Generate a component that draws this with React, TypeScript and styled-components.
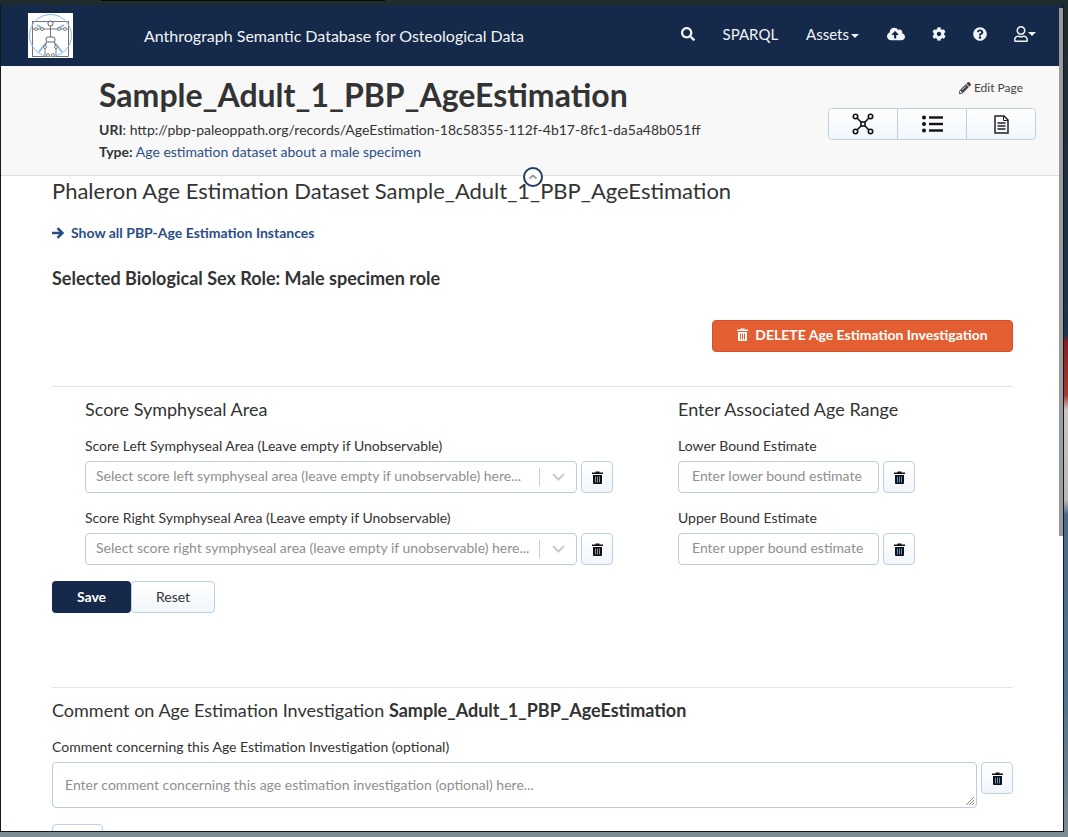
import React from "react";
import styled, { createGlobalStyle } from "styled-components";
import { FaSearch, FaCloudUploadAlt, FaCog, FaQuestionCircle, FaPencilAlt, FaRegUser } from "react-icons/fa";

const Global = createGlobalStyle`
  html, body { margin: 0; padding: 0; height: 837px; overflow: hidden; }
  body { font-family: Lato, "Liberation Sans", sans-serif; font-size: 14px; color: #333; background: #5c6670; }
  * { box-sizing: border-box; }
`;

const Desktop = styled.div`
  position: relative; width: 1068px; height: 837px; overflow: hidden; padding: 5px 4px 0 0;
  background: linear-gradient(180deg,
    #1e2c2e 0, #1e2c2e 6px, #1c3350 335px, #8d1d22 342px, #a83a30 395px, #c9c6c2 410px,
    #b9b6b6 500px, #4a6a8a 515px, #4f7590 700px, #7c8a92 830px, #7c8a92 837px);
  &::before {
    content: ""; position: absolute; left: 101px; top: 0; width: 284px; height: 1px; background: #050808;
  }
`;
const Win = styled.div`
  position: relative; width: 1064px; height: 827px; background: #fff; overflow: hidden;
  border: 1px solid #11181f; border-top: 0;
`;
const Scroll = styled.div`
  position: absolute; top: 3px; right: 0; width: 4px; height: 528px; background: #9a9a9a;
`;
const NavBar = styled.nav`
  height: 61px; background: #152a4a; display: flex; align-items: center; padding: 0 27px 0 27px; color: #f2f4f7;
`;
const Logo = styled.svg`width: 45px; height: 45px; background: #fff; flex: none;`;
const Brand = styled.div`margin-left: 71px; font-size: 16px; flex: 1;`;
const NavItems = styled.div`display: flex; align-items: center; margin-bottom: 4px;`;
const NavIcon = styled.span<{ $ml: number }>`margin-left: ${p => p.$ml}px; display: flex; align-items: center;`;
const NavLink = styled.span<{ $ml: number }>`margin-left: ${p => p.$ml}px; font-size: 15px;`;
const Caret = styled.span<{ $ml?: number }>`
  display: inline-block; margin-left: ${p => p.$ml ?? 2}px; vertical-align: 2px;
  border-top: 4px solid #f2f4f7; border-left: 4px solid transparent; border-right: 4px solid transparent;
`;
const Header = styled.header`
  position: relative; height: 110px; background: #f8f8f8; border-bottom: 1px solid #ddd;
  display: flex; justify-content: space-between; padding: 9px 27px 0 98px;
`;
const Title = styled.h1`margin: -1px 0 0; font-size: 32px; line-height: 41px; font-weight: 700; color: #333;`;
const Meta = styled.div`font-size: 14px; line-height: 22px; margin-top: 4px; color: #333;`;
const Blue = styled.span`color: #2b4e85;`;
const Tools = styled.div`display: flex; flex-direction: column; align-items: flex-end;`;
const Edit = styled.div`font-size: 12px; line-height: 16px; display: flex; align-items: center; gap: 3px; margin: 5px 13px 12px 0; color: #444;`;
const Group = styled.div`display: flex; width: 208px; height: 32px; border: 1px solid #bfcfe0; border-radius: 4px; overflow: hidden;`;
const GroupBtn = styled.div`
  flex: 1; display: flex; align-items: center; justify-content: center;
  background: linear-gradient(#fff, #f1f6fc); & + & { border-left: 1px solid #bfcfe0; }
`;
const Toggle = styled.div`
  position: absolute; left: 522px; top: 101px; width: 20px; height: 20px; border-radius: 50%;
  border: 2px solid #1f3b66; background: #fff; display: flex; align-items: center; justify-content: center;
`;
const Main = styled.main`padding: 0 50px 0 51px;`;
const PageTitle = styled.h2`margin: 2px 0 0; font-size: 22px; line-height: 26px; font-weight: 400; color: #333;`;
const ShowAll = styled.div`margin-top: 19px; font-size: 14px; line-height: 20px; font-weight: 700; color: #2b4e85; display: flex; align-items: center; gap: 7px;`;
const RoleTitle = styled.div`margin-top: 24px; font-size: 18px; line-height: 22px; font-weight: 700; color: #333;`;
const DangerRow = styled.div`display: flex; justify-content: flex-end; margin-top: 31px;`;
const Danger = styled.div`
  width: 301px; height: 32px; padding-bottom: 3px; background: #e35f31; border: 1px solid #cf5228; border-radius: 4px; color: #fff;
  display: flex; align-items: center; justify-content: center; gap: 7px; font-size: 14px; font-weight: 700;
`;
const Rule = styled.hr<{ $top: number }>`border: 0; border-top: 1px solid #e5e5e5; margin: ${p => p.$top}px 0 0;`;
const Columns = styled.div`display: flex; padding-left: 33px;`;
const LeftCol = styled.div`width: 593px;`;
const SectionTitle = styled.div`margin-top: 11px; font-size: 18px; line-height: 22px; color: #333;`;
const Label = styled.div`font-size: 14px; line-height: 18px; color: #333;`;
const Field = styled.div<{ $mt: number }>`margin-top: ${p => p.$mt}px;`;
const Row = styled.div`display: flex; gap: 4px; margin-top: 6px;`;
const Select = styled.div`
  width: 492px; height: 32px; border: 1px solid #bdcbdf; border-radius: 4px; background: #fff;
  display: flex; align-items: center; padding-left: 10px; color: #8f8f8f; font-size: 14px; white-space: nowrap;
`;
const SelectText = styled.span`flex: 1; overflow: hidden; padding-bottom: 3px;`;
const Sep = styled.span`width: 1px; height: 18px; background: #ccc;`;
const Chevron = styled.svg`width: 36px; height: 16px;`;
const Input = styled.div`
  width: 201px; height: 32px; padding: 0 0 3px 13px; border: 1px solid #bdcbdf; border-radius: 4px; background: #fff;
  display: flex; align-items: center; color: #8f8f8f; font-size: 14px; white-space: nowrap;
`;
const TrashBtn = styled.div`
  width: 32px; height: 32px; flex: none; border: 1px solid #bfcfe0; border-radius: 4px;
  background: linear-gradient(#fff, #f1f6fc); display: flex; align-items: center; justify-content: center;
`;
const Buttons = styled.div`display: flex; margin-top: 16px;`;
const Save = styled.div`
  width: 79px; height: 32px; padding-bottom: 2px; background: #152a4a; border-radius: 4px; color: #fff; font-weight: 700; font-size: 14px;
  display: flex; align-items: center; justify-content: center;
`;
const Reset = styled.div`
  width: 84px; height: 32px; padding-bottom: 2px; border: 1px solid #bfcfe0; border-radius: 4px; background: linear-gradient(#fff, #f1f6fc);
  color: #333; font-size: 14px; display: flex; align-items: center; justify-content: center;
`;
const CommentTitle = styled.div`margin-top: 10px; font-size: 18px; line-height: 24px; color: #333; b { font-weight: 700; }`;
const CommentLabel = styled.div`margin-top: 16px; font-size: 14px; line-height: 18px;`;
const CommentRow = styled.div`display: flex; gap: 4px; margin-top: 6px; align-items: flex-start;`;
const Comment = styled.div`
  position: relative; flex: 1; height: 46px; padding: 0 0 2px 12px; border: 1px solid #bdcbdf; border-radius: 4px; color: #8f8f8f;
  display: flex; align-items: center; font-size: 14px;
`;
const Grip = styled.svg`position: absolute; right: 1px; bottom: 1px; width: 10px; height: 10px;`;
const NextBtn = styled.div`
  width: 51px; height: 32px; margin-top: 16px; border: 1px solid #bfcfe0; border-radius: 4px; background: #fff;
`;

const Vitruvian = () => (
  <Logo viewBox="0 0 45 45">
    <rect x="4.500" y="8.500" width="36" height="35" fill="none" stroke="#555" strokeWidth="0.8" />
    <circle cx="22.500" cy="22.500" r="21" fill="none" stroke="#85b8ec" strokeWidth="1" />
    <path d="M9 12l7 4M36 12l-7 4M11 39l7-9M34 39l-7-9" stroke="#85b8ec" strokeWidth="2" />
    <circle cx="22.500" cy="10.500" r="2.600" fill="#fff" stroke="#555" />
    <path d="M5 16h35M22.500 13v11M17 34v8M28 34v8M19 28l-2 6M26 28l2 6" fill="none" stroke="#666" strokeWidth="0.9" />
    <rect x="18" y="24" width="9" height="5" rx="2" fill="#fff" stroke="#666" />
    <g fill="#fff" stroke="#666" strokeWidth="0.8">
      <circle cx="8" cy="16" r="1.500" /><circle cx="14" cy="16" r="1.500" />
      <circle cx="31" cy="16" r="1.500" /><circle cx="37" cy="16" r="1.500" />
      <circle cx="17" cy="34" r="1.500" /><circle cx="28" cy="34" r="1.500" />
      <circle cx="20" cy="42" r="1.500" /><circle cx="25" cy="42" r="1.500" />
    </g>
  </Logo>
);

const NetworkIcon = () => (
  <svg width="22" height="22" viewBox="0 0 22 22" fill="none" stroke="#111" strokeWidth="1.600">
    <circle cx="3.500" cy="3.500" r="2.200" /><circle cx="18.500" cy="3.500" r="2.200" />
    <circle cx="3.500" cy="18.500" r="2.200" /><circle cx="18.500" cy="18.500" r="2.200" />
    <rect x="9" y="9" width="4" height="4" />
    <path d="M5 5l4 4M17 5l-4 4M5 17l4-4M17 17l-4-4" />
  </svg>
);
const ListIcon = () => (
  <svg width="21" height="18" viewBox="0 0 21 18" fill="#111">
    <circle cx="2" cy="2.500" r="2" /><circle cx="2" cy="9" r="2" /><circle cx="2" cy="15.500" r="2" />
    <rect x="7" y="1.300" width="14" height="2.400" /><rect x="7" y="7.800" width="14" height="2.400" /><rect x="7" y="14.300" width="14" height="2.400" />
  </svg>
);
const DocIcon = () => (
  <svg width="15" height="19" viewBox="0 0 15 19" fill="none" stroke="#222" strokeWidth="1.500">
    <path d="M1 1h9l4 4v13H1z" /><path d="M9.500 1v4.500H14" strokeWidth="1" /><path d="M3.500 8h8M3.500 11h8M3.500 14h8" />
  </svg>
);
const ArrowIcon = () => (
  <svg width="12" height="12" viewBox="0 0 12 12" fill="none" stroke="#2b4e85" strokeWidth="2.600">
    <path d="M0 6h10M5.500 1.200L10.300 6l-4.800 4.800" />
  </svg>
);
const TrashIcon = ({ body = "#111", stripe = "#8a94a0" }: { body?: string; stripe?: string }) => (
  <svg width="11" height="13" viewBox="0 0 11 13">
    <path d="M3.500 1.500V.5h4v1H11v1.500H0V1.500z" fill={body} />
    <path d="M1 4h9v8a1 1 0 0 1-1 1H2a1 1 0 0 1-1-1z" fill={body} />
    <path d="M3.500 5.500v6M5.500 5.500v6M7.500 5.500v6" stroke={stripe} strokeWidth="1" />
  </svg>
);
const Drop = () => (
  <Chevron viewBox="0 0 36 16"><path d="M13 5l5.500 5.500L24 5" fill="none" stroke="#ccc" strokeWidth="2" /></Chevron>
);

export default function App() {
  return (
    <Desktop>
      <Global />
      <Win>
        <NavBar>
          <Vitruvian />
          <Brand>Anthrograph Semantic Database for Osteological Data</Brand>
          <NavItems>
            <NavIcon $ml={0}><FaSearch size={14} /></NavIcon>
            <NavLink $ml={28}>SPARQL</NavLink>
            <NavLink $ml={28}>Assets<Caret /></NavLink>
            <NavIcon $ml={28}><FaCloudUploadAlt size={18} /></NavIcon>
            <NavIcon $ml={27}><FaCog size={14} /></NavIcon>
            <NavIcon $ml={27}><FaQuestionCircle size={14} /></NavIcon>
            <NavIcon $ml={26}><FaRegUser size={16} /><Caret $ml={-1} /></NavIcon>
          </NavItems>
        </NavBar>
        <Header>
          <div>
            <Title>Sample_Adult_1_PBP_AgeEstimation</Title>
            <Meta>
              <div><b>URI</b>: http://pbp-paleoppath.org/records/AgeEstimation-18c58355-112f-4b17-8fc1-da5a48b051ff</div>
              <div><b>Type:</b> <Blue>Age estimation dataset about a male specimen</Blue></div>
            </Meta>
          </div>
          <Tools>
            <Edit><FaPencilAlt size={12} />Edit Page</Edit>
            <Group>
              <GroupBtn><NetworkIcon /></GroupBtn>
              <GroupBtn><ListIcon /></GroupBtn>
              <GroupBtn><DocIcon /></GroupBtn>
            </Group>
          </Tools>
          <Toggle>
            <svg width="10" height="6" viewBox="0 0 10 6"><path d="M1.500 4.500L5 1.500l3.500 3" fill="none" stroke="#999" strokeWidth="1.800" /></svg>
          </Toggle>
        </Header>
        <Main>
          <PageTitle>Phaleron Age Estimation Dataset Sample_Adult_1_PBP_AgeEstimation</PageTitle>
          <ShowAll><ArrowIcon />Show all PBP-Age Estimation Instances</ShowAll>
          <RoleTitle>Selected Biological Sex Role: Male specimen role</RoleTitle>
          <DangerRow><Danger><TrashIcon body="#fff" stripe="#e35f31" />DELETE Age Estimation Investigation</Danger></DangerRow>
          <Rule $top={34} />
          <Columns>
            <LeftCol>
              <SectionTitle>Score Symphyseal Area</SectionTitle>
              <Field $mt={17}>
                <Label>Score Left Symphyseal Area (Leave empty if Unobservable)</Label>
                <Row>
                  <Select><SelectText>Select score left symphyseal area (leave empty if unobservable) here...</SelectText><Sep /><Drop /></Select>
                  <TrashBtn><TrashIcon /></TrashBtn>
                </Row>
              </Field>
              <Field $mt={16}>
                <Label>Score Right Symphyseal Area (Leave empty if Unobservable)</Label>
                <Row>
                  <Select><SelectText>Select score right symphyseal area (leave empty if unobservable) here...</SelectText><Sep /><Drop /></Select>
                  <TrashBtn><TrashIcon /></TrashBtn>
                </Row>
              </Field>
            </LeftCol>
            <div>
              <SectionTitle>Enter Associated Age Range</SectionTitle>
              <Field $mt={17}>
                <Label>Lower Bound Estimate</Label>
                <Row><Input>Enter lower bound estimate</Input><TrashBtn><TrashIcon stripe="#5b93c9" /></TrashBtn></Row>
              </Field>
              <Field $mt={16}>
                <Label>Upper Bound Estimate</Label>
                <Row><Input>Enter upper bound estimate</Input><TrashBtn><TrashIcon stripe="#5b93c9" /></TrashBtn></Row>
              </Field>
            </div>
          </Columns>
          <Buttons><Save>Save</Save><Reset>Reset</Reset></Buttons>
          <Rule $top={74} />
          <CommentTitle>Comment on Age Estimation Investigation <b>Sample_Adult_1_PBP_AgeEstimation</b></CommentTitle>
          <CommentLabel>Comment concerning this Age Estimation Investigation (optional)</CommentLabel>
          <CommentRow>
            <Comment>
              Enter comment concerning this age estimation investigation (optional) here...
              <Grip viewBox="0 0 10 10"><path d="M1 9l8-8M4 9l5-5M7 9l2-2" stroke="#888" strokeWidth="1" /></Grip>
            </Comment>
            <TrashBtn><TrashIcon stripe="#5b93c9" /></TrashBtn>
          </CommentRow>
          <NextBtn />
        </Main>
        <Scroll />
      </Win>
    </Desktop>
  );
}
